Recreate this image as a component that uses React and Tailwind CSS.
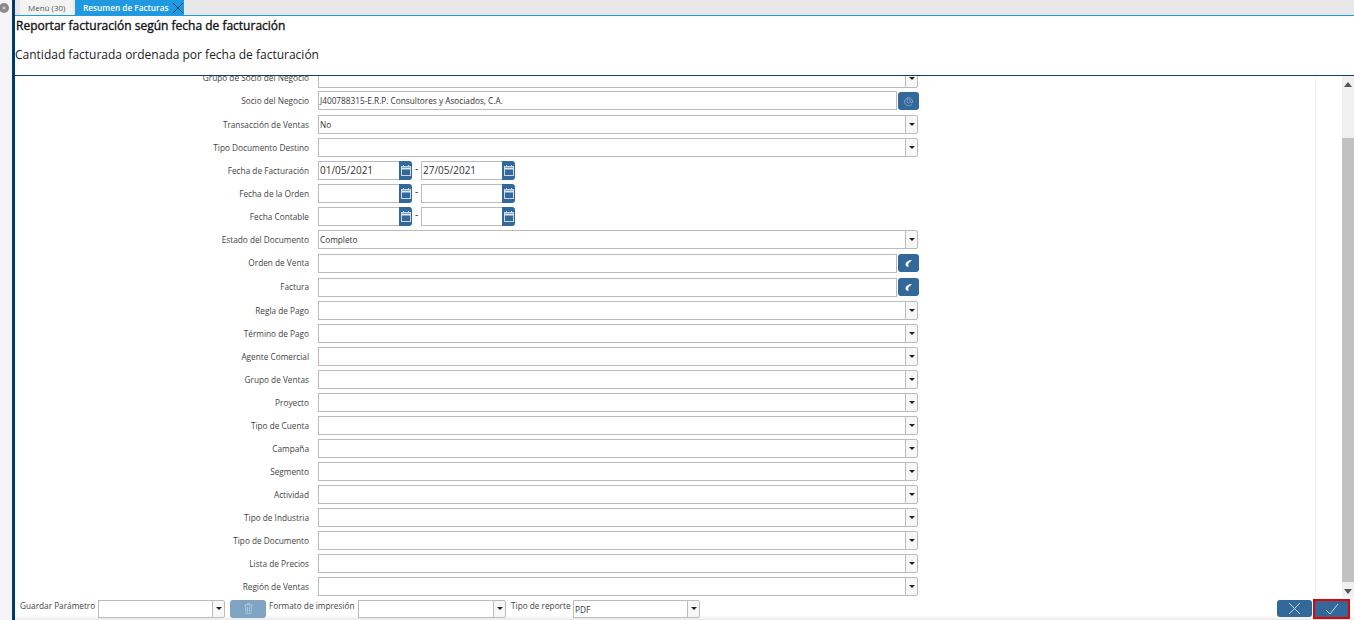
const ROWS_A = [
  ["Grupo de Socio del Negocio", "select", ""],
  ["Socio del Negocio", "search", "J400788315-E.R.P. Consultores y Asociados, C.A."],
  ["Transacción de Ventas", "select", "No"],
  ["Tipo Documento Destino", "select", ""],
  ["Fecha de Facturación", "date", "01/05/2021", "27/05/2021"],
  ["Fecha de la Orden", "date", "", ""],
  ["Fecha Contable", "date", "", ""],
  ["Estado del Documento", "select", "Completo"],
  ["Orden de Venta", "info", ""],
  ["Factura", "info", ""],
];
const ROWS_B = ["Regla de Pago", "Término de Pago", "Agente Comercial", "Grupo de Ventas", "Proyecto", "Tipo de Cuenta", "Campaña", "Segmento", "Actividad", "Tipo de Industria", "Tipo de Documento", "Lista de Precios", "Región de Ventas"];

function Arrow() {
  return (
    <svg width="6" height="3" viewBox="0 0 6 3"><path d="M0 0h6L3 3z" fill="#222" /></svg>
  );
}

function Select({ value, className }) {
  return (
    <div className={`flex h-[19px] shrink-0 ${className}`}>
      <div className="flex-1 min-w-0 border border-[#bbbbbb] bg-white pl-[1px] text-[8.25px] leading-[17px] text-[#333]">{value}</div>
      <div className="w-[13px] -ml-px border border-[#bbbbbb] rounded-r-[2px] bg-[#f7f7f7] flex items-center justify-center"><Arrow /></div>
    </div>
  );
}

function Calendar() {
  return (
    <div className="w-[13px] h-[19px] -ml-px bg-[#33689b] rounded-r-[3px] flex items-center justify-center shrink-0">
      <svg width="10" height="11" viewBox="0 0 10 11" fill="none"><rect x="0.5" y="1.500" width="9" height="9" stroke="#c7d8e8" /><path d="M0 3.500h10" stroke="#dbe7f1" strokeWidth="2" /><path d="M2.500 0v1.500M7.500 0v1.500" stroke="#c7d8e8" /></svg>
    </div>
  );
}

function DateBox({ value }) {
  return (
    <div className="flex h-[19px] w-[94px]">
      <div className="w-[82px] border border-[#bbbbbb] bg-white pl-[1px] text-[10px] leading-[17px] text-[#333]">{value}</div>
      <Calendar />
    </div>
  );
}

function SideButton({ children }) {
  return (
    <div className="w-[21px] h-[18px] ml-px rounded-[3px] bg-[#33689b] flex items-center justify-center">{children}</div>
  );
}

function Control({ row }) {
  const [, kind, a, b] = row;
  if (kind === "select") return <Select value={a} className="w-[600px]" />;
  if (kind === "date") {
    return (
      <div className="flex items-start">
        <DateBox value={a} />
        <span className="w-[9px] text-center text-[10px] leading-[14px] text-[#333]">-</span>
        <DateBox value={b} />
      </div>
    );
  }
  return (
    <div className="flex items-center w-[601px]">
      <div className="w-[579px] h-[19px] border border-[#bbbbbb] bg-white pl-[1px] text-[8.25px] leading-[17px] text-[#333]">{a}</div>
      <SideButton>
        {kind === "search" ? (
          <svg width="9" height="10" viewBox="0 0 9 10" fill="none" stroke="#7fa3c6"><path d="M7.500 8.500A4 4 0 1 1 8.500 5v1.500H6.500" /><rect x="3" y="3" width="3" height="4" rx="1.500" /></svg>
        ) : (
          <svg width="7" height="7" viewBox="0 0 7 7"><path d="M7 0C4 0 1 2 .5 4 .3 5.500 1.500 7 3.500 7 3.500 5.500 3 4.500 3.500 3.500 4.500 2 6 1.200 7 0z" fill="#fff" /></svg>
        )}
      </SideButton>
    </div>
  );
}

function Row({ row, h = "h-[23px]" }) {
  return (
    <div className={`flex items-center ${h}`}>
      <div className="w-[294px] pt-px text-right text-[8.25px] text-[#444] leading-none">{row[0]}</div>
      <div className="ml-[9px]"><Control row={row} /></div>
    </div>
  );
}

export default function App() {
  return (
    <div className="w-[1354px] h-[620px] overflow-hidden flex bg-white font-['Open_Sans',sans-serif]">
      <div className="w-[12px] bg-[#f5f5f5] shrink-0 flex justify-center pt-[3px]">
        <div className="w-[10px] h-[10px] -ml-[4px] rounded-full bg-[#8a8a8a] text-white text-[7px] leading-[9px] text-center">»</div>
      </div>
      <div className="w-[3px] bg-[#003a6c] shrink-0" />
      <div className="flex-1 min-w-0 flex flex-col">
        <div className="h-[16px] bg-[#e8e8e8] border-b border-[#1f9ae0] flex items-end pl-[5px] gap-[2px] shrink-0">
          <div className="w-[53px] h-[15px] bg-[#f3f3f3] pl-[8px] text-[8px] leading-[15px] text-[#555] whitespace-nowrap">Menú (30)</div>
          <div className="w-[109px] h-[15px] bg-[#1f9ae0] flex items-center pl-[8px] justify-between">
            <span className="text-[8.25px] font-semibold text-white leading-[15px] whitespace-nowrap">Resumen de Facturas</span>
            <svg width="12" height="12" viewBox="0 0 12 12" stroke="#15486f" fill="none" className="shrink-0"><path d="M1 1l10 10M11 1L1 11" /></svg>
          </div>
        </div>
        <div className="h-[60px] border-b border-[#123f66] shrink-0 bg-white">
          <div className="pt-px pl-px text-[12px] [-webkit-text-stroke:0.35px_#111] leading-[18px] text-[#111]">Reportar facturación según fecha de facturación</div>
          <div className="mt-[11px] text-[12px] leading-[18px] text-[#222]">Cantidad facturada ordenada por fecha de facturación</div>
        </div>
        <div className="flex-1 min-h-0 flex">
          <div className="flex-1 min-w-0 overflow-hidden">
            <div className="-mt-[9px]">
              <Row row={ROWS_A[0]} h="h-[22px]" />
              <Row row={ROWS_A[1]} />
              <div className="h-px" />
              {ROWS_A.slice(2, 8).map((r) => <Row key={r[0]} row={r} />)}
              <Row row={ROWS_A[8]} h="h-[24px]" />
              <Row row={ROWS_A[9]} h="h-[24px]" />
              {ROWS_B.map((label) => <Row key={label} row={[label, "select", ""]} />)}
            </div>
          </div>
          <div className="w-[27px] border-l border-[#f3f3f3] shrink-0" />
          <div className="w-[12px] bg-[#f0f0f0] shrink-0 h-[521px] flex flex-col items-center pt-[6px]">
            <svg width="8" height="5" viewBox="0 0 8 5" className="shrink-0"><path d="M4 0l4 5H0z" fill="#555" /></svg>
            <div className="w-[12px] h-[444px] mt-[51px] bg-[#c1c1c1] shrink-0" />
            <svg width="8" height="5" viewBox="0 0 8 5" className="shrink-0 mt-[7px]"><path d="M0 0h8L4 5z" fill="#555" /></svg>
          </div>
        </div>
        <div className="h-[23px] shrink-0 flex items-center pl-[5px] text-[8.25px] text-[#444] bg-gradient-to-b from-white from-80% to-[#e9e9e9]">
          <span className="w-[78px] shrink-0 -mt-[4px] whitespace-nowrap">Guardar Parámetro</span>
          <Select value="" className="w-[127px] !h-[18px]" />
          <div className="w-[36px] h-[18px] ml-[5px] shrink-0 rounded-[3px] bg-[#7fa3c3] flex items-center justify-center">
            <svg width="9" height="11" viewBox="0 0 9 11" fill="none" stroke="#a9c2d9"><path d="M0 2h9M3 2V.5h3V2M1.500 2l.5 8.500h5l.5-8.500M3.500 4v5M5.500 4v5" /></svg>
          </div>
          <span className="w-[89px] ml-[3px] shrink-0 -mt-[4px] whitespace-nowrap">Formato de impresión</span>
          <Select value="" className="w-[148px] !h-[18px]" />
          <span className="w-[62px] ml-[5px] shrink-0 -mt-[4px] whitespace-nowrap">Tipo de reporte</span>
          <Select value="PDF" className="w-[127px] !h-[18px]" />
          <div className="flex-1" />
          <div className="w-[35px] h-[17px] rounded-[3px] bg-[#33689b] flex items-center justify-center">
            <svg width="13" height="13" viewBox="0 0 13 13" fill="none" stroke="#c9d9e8"><path d="M1 1l11 11M12 1L1 12" /></svg>
          </div>
          <div className="w-[37px] h-[20px] ml-px mr-[4px] border-2 border-[#e60000] bg-[#33689b] flex items-center justify-center">
            <svg width="14" height="12" viewBox="0 0 14 12" fill="none" stroke="#c9d9e8"><path d="M1 7l4 4 8-10" /></svg>
          </div>
        </div>
      </div>
    </div>
  );
}
